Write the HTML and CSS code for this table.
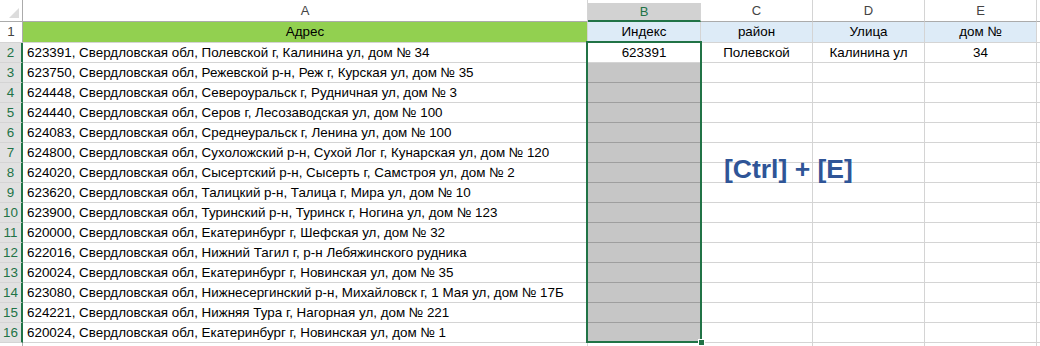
FILE: index.html
```html
<!DOCTYPE html>
<html>
<head>
<meta charset="utf-8">
<link rel="stylesheet" href="styles.css">
</head>
<body>
<div class="sheet">
  <div class="grid">
    <div class="ch corner"><svg width="10" height="10" viewBox="0 0 10 10"><polygon points="10,0 10,10 0,10" fill="#dcdcdc"/></svg></div>
    <div class="ch">A</div>
    <div class="ch sel">B</div>
    <div class="ch">C</div>
    <div class="ch">D</div>
    <div class="ch">E</div>
    <div class="ch last"></div>

    <div class="rh">1</div>
    <div class="c hdr-green center">Адрес</div>
    <div class="c hdr-blue center">Индекс</div>
    <div class="c hdr-blue center">район</div>
    <div class="c hdr-blue center">Улица</div>
    <div class="c hdr-blue center">дом №</div>
    <div class="c last"></div>

    <div class="rh rsel">2</div>
    <div class="c">623391, Свердловская обл, Полевской г, Калинина ул, дом № 34</div>
    <div class="c center">623391</div>
    <div class="c center">Полевской</div>
    <div class="c center">Калинина ул</div>
    <div class="c center">34</div>
    <div class="c last"></div>

    <div class="rh rsel">3</div>
    <div class="c">623750, Свердловская обл, Режевской р-н, Реж г, Курская ул, дом № 35</div>
    <div class="c grey"></div><div class="c"></div><div class="c"></div><div class="c"></div><div class="c last"></div>

    <div class="rh rsel">4</div>
    <div class="c">624448, Свердловская обл, Североуральск г, Рудничная ул, дом № 3</div>
    <div class="c grey"></div><div class="c"></div><div class="c"></div><div class="c"></div><div class="c last"></div>

    <div class="rh rsel">5</div>
    <div class="c">624440, Свердловская обл, Серов г, Лесозаводская ул, дом № 100</div>
    <div class="c grey"></div><div class="c"></div><div class="c"></div><div class="c"></div><div class="c last"></div>

    <div class="rh rsel">6</div>
    <div class="c">624083, Свердловская обл, Среднеуральск г, Ленина ул, дом № 100</div>
    <div class="c grey"></div><div class="c"></div><div class="c"></div><div class="c"></div><div class="c last"></div>

    <div class="rh rsel">7</div>
    <div class="c">624800, Свердловская обл, Сухоложский р-н, Сухой Лог г, Кунарская ул, дом № 120</div>
    <div class="c grey"></div><div class="c"></div><div class="c"></div><div class="c"></div><div class="c last"></div>

    <div class="rh rsel">8</div>
    <div class="c">624020, Свердловская обл, Сысертский р-н, Сысерть г, Самстроя ул, дом № 2</div>
    <div class="c grey"></div><div class="c"></div><div class="c"></div><div class="c"></div><div class="c last"></div>

    <div class="rh rsel">9</div>
    <div class="c">623620, Свердловская обл, Талицкий р-н, Талица г, Мира ул, дом № 10</div>
    <div class="c grey"></div><div class="c"></div><div class="c"></div><div class="c"></div><div class="c last"></div>

    <div class="rh rsel">10</div>
    <div class="c">623900, Свердловская обл, Туринский р-н, Туринск г, Ногина ул, дом № 123</div>
    <div class="c grey"></div><div class="c"></div><div class="c"></div><div class="c"></div><div class="c last"></div>

    <div class="rh rsel">11</div>
    <div class="c">620000, Свердловская обл, Екатеринбург г, Шефская ул, дом № 32</div>
    <div class="c grey"></div><div class="c"></div><div class="c"></div><div class="c"></div><div class="c last"></div>

    <div class="rh rsel">12</div>
    <div class="c">622016, Свердловская обл, Нижний Тагил г, р-н Лебяжинского рудника</div>
    <div class="c grey"></div><div class="c"></div><div class="c"></div><div class="c"></div><div class="c last"></div>

    <div class="rh rsel">13</div>
    <div class="c">620024, Свердловская обл, Екатеринбург г, Новинская ул, дом № 35</div>
    <div class="c grey"></div><div class="c"></div><div class="c"></div><div class="c"></div><div class="c last"></div>

    <div class="rh rsel">14</div>
    <div class="c">623080, Свердловская обл, Нижнесергинский р-н, Михайловск г, 1 Мая ул, дом № 17Б</div>
    <div class="c grey"></div><div class="c"></div><div class="c"></div><div class="c"></div><div class="c last"></div>

    <div class="rh rsel">15</div>
    <div class="c">624221, Свердловская обл, Нижняя Тура г, Нагорная ул, дом № 221</div>
    <div class="c grey"></div><div class="c"></div><div class="c"></div><div class="c"></div><div class="c last"></div>

    <div class="rh rsel">16</div>
    <div class="c">620024, Свердловская обл, Екатеринбург г, Новинская ул, дом № 1</div>
    <div class="c grey"></div><div class="c"></div><div class="c"></div><div class="c"></div><div class="c last"></div>

    <div class="rh"></div>
    <div class="c"></div><div class="c"></div><div class="c"></div><div class="c"></div><div class="c"></div><div class="c last"></div>
  </div>
  <div class="selection"><span class="handle"></span></div>
  <div class="hint">[Ctrl] + [E]</div>
</div>
</body>
</html>
```

FILE: styles.css
```css
* { box-sizing: border-box; }
html, body { margin: 0; padding: 0; background: #fff; }
body { width: 1040px; height: 346px; overflow: hidden; }
.sheet {
  position: relative;
  width: 1040px;
  height: 346px;
  overflow: hidden;
  font-family: "Liberation Sans", Arial, sans-serif;
  font-size: 13.4px;
  color: #000;
}
.grid {
  display: grid;
  grid-template-columns: 23px 565px 113px 112px 112px 112px 23px;
  grid-template-rows: 22px 21px repeat(16, 20px);
}
.ch {
  background: #fff;
  border-right: 1px solid #d4d4d4;
  border-bottom: 1px solid #ababab;
  color: #444;
  text-align: center;
  line-height: 22px;
  font-size: 13px;
}
.ch.corner {
  display: flex;
  align-items: flex-end;
  justify-content: flex-end;
  padding: 0 3px 3px 0;
  border-right: 1px solid #ababab;
}
.ch.sel {
  background: #d2d2d2;
  color: #217346;
  border-bottom: 2px solid #217346;
  margin-top: 3px;
  line-height: 18px;
}
.rh {
  border-right: 1px solid #ababab;
  border-bottom: 1px solid #d4d4d4;
  color: #444;
  text-align: center;
  line-height: 20px;
  font-size: 13.4px;
}
.rh.rsel {
  background: #e1e1e1;
  color: #217346;
  border-right: 2px solid #217346;
}
.c {
  border-right: 1px solid #d4d4d4;
  border-bottom: 1px solid #d4d4d4;
  line-height: 20px;
  padding: 0 4px;
  white-space: nowrap;
  overflow: visible;
}
.c.last { border-right: none; }
.center { text-align: center; }
.hdr-green { background: #92d050; }
.hdr-blue { background: #ddebf7; }
.grey {
  background: #c6c6c6;
  border-bottom-color: #9e9e9e;
}
.selection {
  position: absolute;
  left: 586px;
  top: 41px;
  width: 116px;
  height: 302px;
  border: 2px solid #217346;
  pointer-events: none;
}
.handle {
  position: absolute;
  right: -5px;
  bottom: -5px;
  width: 7px;
  height: 7px;
  background: #217346;
  border: 1px solid #fff;
}
.hint {
  position: absolute;
  left: 724px;
  top: 154px;
  font-family: "Liberation Sans", Arial, sans-serif;
  font-weight: bold;
  font-size: 26.5px;
  color: #2f5597;
  white-space: nowrap;
}
```
